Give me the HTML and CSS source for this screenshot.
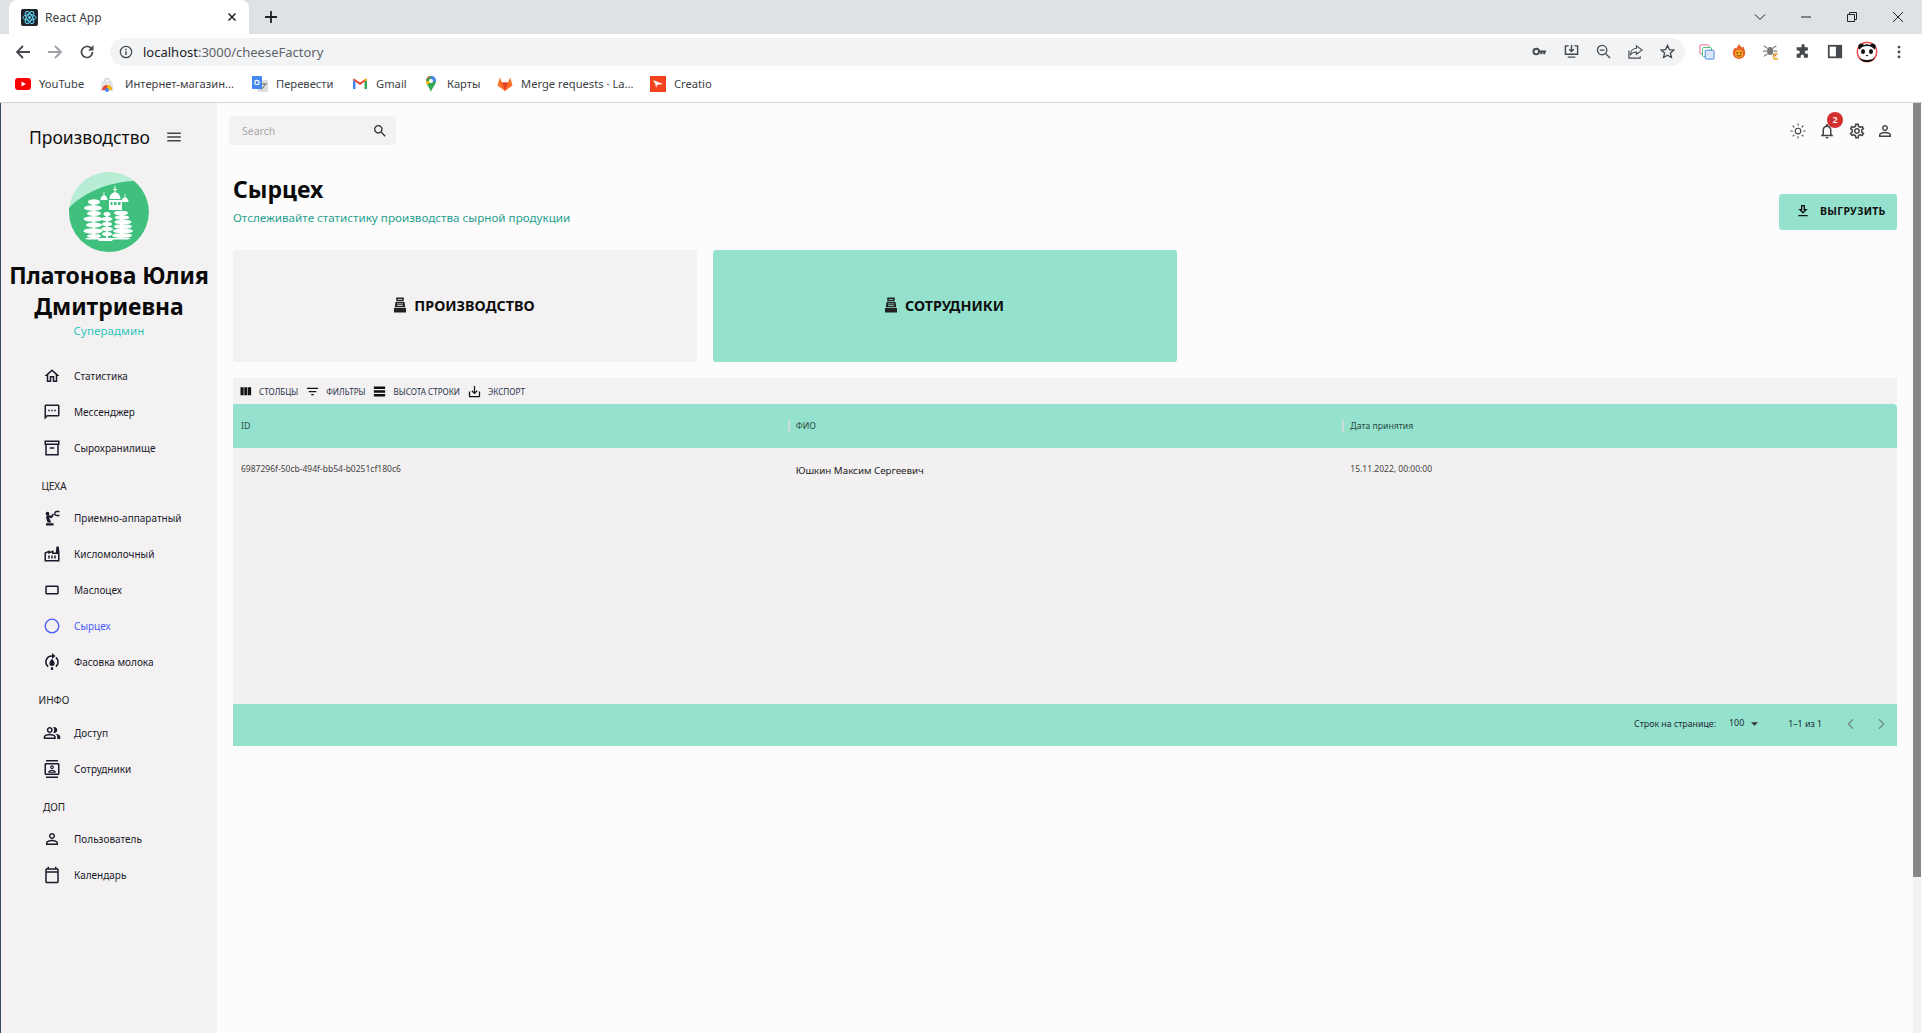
FILE: index.html
```html
<!DOCTYPE html>
<html lang="ru">
<head>
<meta charset="utf-8">
<title>React App</title>
<link rel="stylesheet" href="styles.css">
</head>
<body>
<svg class="sprite" xmlns="http://www.w3.org/2000/svg">
  <symbol id="i-home" viewBox="0 0 24 24"><path d="M12 5.69l5 4.5V18h-2v-6H9v6H7v-7.81l5-4.5M12 3L2 12h3v8h6v-6h2v6h6v-8h3L12 3z"/></symbol>
  <symbol id="i-sms" viewBox="0 0 24 24"><path d="M20 2H4c-1.1 0-2 .9-2 2v18l4-4h14c1.1 0 2-.9 2-2V4c0-1.1-.9-2-2-2zm0 14H5.17L4 17.17V4h16v12zM7 9h2v2H7zm4 0h2v2h-2zm4 0h2v2h-2z"/></symbol>
  <symbol id="i-archive" viewBox="0 0 24 24"><path fill-rule="evenodd" d="M2 2h20v6h-1v14H3V8H2V2zm2 2v2h16V4H4zm1 4v12h14V8H5zm4 3h6v2H9v-2z"/></symbol>
  <symbol id="i-robot" viewBox="0 0 24 24"><path d="M4 19h10v3H4zM6 18l-2-7 1-2 2-1 4 1 2-3 1.800 1.200-3 5-3.800-1 3 6.800zM3.500 6a2.500 2.500 0 1 1 5 0 2.500 2.500 0 0 1-5 0zM22 4.200h-3.500a1.800 1.800 0 0 0 0 3.600H22v1.800h-3.500a3.600 3.600 0 0 1 0-7.200H22z"/></symbol>
  <symbol id="i-factory" viewBox="0 0 24 24"><path d="M22 22H2V10l7-3v2l5-2v3h3l1-8h3l1 8v12zM12 9.950l-5 2V10l-3 1.320V20h16v-8h-8V9.950zM11 18h2v-4h-2v4zm-4 0h2v-4H7v4zm10-4h-2v4h2v-4z"/></symbol>
  <symbol id="i-rect" viewBox="0 0 24 24"><path d="M19 6H5c-1.100 0-2 .9-2 2v8c0 1.100.9 2 2 2h14c1.100 0 2-.9 2-2V8c0-1.100-.9-2-2-2zm0 10H5V8h14v8z"/></symbol>
  <symbol id="i-circle" viewBox="0 0 24 24"><path d="M12 2a10 10 0 1 0 0 20 10 10 0 0 0 0-20zm0 18.200a8.200 8.200 0 1 1 0-16.400 8.200 8.200 0 0 1 0 16.400z"/></symbol>
  <symbol id="i-fill" viewBox="0 0 24 24"><path d="M12 3V0l4.500 4L12 8V5a7 7 0 0 0-4.500 12.400L6.200 19A9 9 0 0 1 12 3zM17.800 5a9 9 0 0 1 0 14l-1.300-1.600a7 7 0 0 0 0-10.800zM12 7.500c2 2.500 3.500 4.300 3.500 6.200a3.500 3.500 0 0 1-7 0c0-1.900 1.500-3.700 3.500-6.200zM10.500 19h3v3.500h-3z"/></symbol>
  <symbol id="i-people" viewBox="0 0 24 24"><path d="M16.670 13.130C18.040 14.060 19 15.320 19 17v3h4v-3c0-2.180-3.570-3.470-6.330-3.870zM15 12c2.210 0 4-1.790 4-4s-1.790-4-4-4c-.47 0-.91.1-1.330.24C14.500 5.270 15 6.580 15 8s-.5 2.730-1.330 3.760c.42.14.86.24 1.330.24zM9 12c2.210 0 4-1.790 4-4s-1.790-4-4-4-4 1.790-4 4 1.790 4 4 4zm0-6c1.100 0 2 .9 2 2s-.9 2-2 2-2-.9-2-2 .9-2 2-2zM9 13c-2.670 0-8 1.340-8 4v3h16v-3c0-2.660-5.330-4-8-4zm6 5H3v-.99C3.200 16.290 6.300 15 9 15s5.800 1.290 6 2v1z"/></symbol>
  <symbol id="i-contacts" viewBox="0 0 24 24"><path d="M20 0H4v2h16V0zM4 24h16v-2H4v2zM20 4H4c-1.100 0-2 .9-2 2v12c0 1.100.9 2 2 2h16c1.100 0 2-.9 2-2V6c0-1.100-.9-2-2-2zm0 14H4V6h16v12zM12 12c1.380 0 2.500-1.120 2.500-2.500S13.380 7 12 7 9.500 8.120 9.500 9.500 10.620 12 12 12zm0-3.500c.55 0 1 .45 1 1s-.45 1-1 1-1-.45-1-1 .45-1 1-1zm5 7.490C17 13.900 13.690 13 12 13s-5 .9-5 2.990V17h10v-1.010zm-8.190-.49c.61-.52 2.030-1 3.190-1 1.170 0 2.590.48 3.200 1H8.810z"/></symbol>
  <symbol id="i-person" viewBox="0 0 24 24"><path d="M12 5.900c1.160 0 2.100.94 2.100 2.100s-.94 2.100-2.100 2.100S9.900 9.160 9.900 8s.94-2.100 2.100-2.100m0 9c2.970 0 6.100 1.460 6.100 2.100v1.100H5.900V17c0-.64 3.130-2.100 6.100-2.100M12 4C9.790 4 8 5.790 8 8s1.790 4 4 4 4-1.790 4-4-1.790-4-4-4zm0 9c-2.670 0-8 1.340-8 4v3h16v-3c0-2.660-5.330-4-8-4z"/></symbol>
  <symbol id="i-calendar" viewBox="0 0 24 24"><path d="M19 3h-1V1h-2v2H8V1H6v2H5c-1.100 0-2 .9-2 2v16c0 1.100.9 2 2 2h14c1.100 0 2-.9 2-2V5c0-1.100-.9-2-2-2zm0 18H5V9h14v12zm0-14H5V5h14v2z"/></symbol>
  <symbol id="i-stamp" viewBox="0 0 24 24"><path fill-rule="evenodd" d="M7 2h10v5H7zM9 4v1h6V4zM6 8h12l1 7H5zM8 10v1h8v-1zM8 12v1h8v-1zM4 16h16v6H4z"/></symbol>
  <symbol id="i-columns" viewBox="0 0 24 24"><path d="M10 18h5V5h-5v13zm-6 0h5V5H4v13zM16 5v13h5V5h-5z"/></symbol>
  <symbol id="i-filter" viewBox="0 0 24 24"><path d="M10 18h4v-2h-4v2zM3 6v2h18V6H3zm3 7h12v-2H6v2z"/></symbol>
  <symbol id="i-rows" viewBox="0 0 24 24"><path d="M21 8H3V4h18v4zm0 2H3v4h18v-4zm0 6H3v4h18v-4z"/></symbol>
  <symbol id="i-export" viewBox="0 0 24 24"><path d="M19 12v7H5v-7H3v7c0 1.100.9 2 2 2h14c1.100 0 2-.9 2-2v-7h-2zm-6 .67l2.590-2.580L17 11.500l-5 5-5-5 1.410-1.410L11 12.670V3h2z"/></symbol>
  <symbol id="i-download" viewBox="0 0 24 24"><path d="M13 5v6h1.170L12 13.170 9.830 11H11V5h2m2-2H9v6H5l7 7 7-7h-4V3zm4 15H5v2h14v-2z"/></symbol>
  <symbol id="i-search" viewBox="0 0 24 24"><path d="M15.500 14h-.79l-.28-.27C15.410 12.590 16 11.110 16 9.500 16 5.910 13.090 3 9.500 3S3 5.910 3 9.500 5.910 16 9.500 16c1.610 0 3.090-.59 4.230-1.570l.27.28v.79l5 4.990L20.490 19l-4.990-5zm-6 0C7.010 14 5 11.990 5 9.500S7.010 5 9.500 5 14 7.010 14 9.500 11.990 14 9.500 14z"/></symbol>
  <symbol id="i-sun" viewBox="0 0 24 24"><path d="M12 9a3 3 0 1 1 0 6 3 3 0 0 1 0-6m0-1.500a4.500 4.500 0 1 0 0 9 4.500 4.500 0 0 0 0-9zM11.300 2h1.400v3h-1.400zM11.300 19h1.400v3h-1.400zM2 11.300h3v1.400H2zM19 11.300h3v1.400h-3zM4.400 5.400l1-1 2.100 2.100-1 1zM16.500 17.500l1-1 2.100 2.100-1 1zM4.400 18.600l2.100-2.100 1 1-2.100 2.100zM16.500 6.500l2.100-2.100 1 1-2.100 2.100z"/></symbol>
  <symbol id="i-bell" viewBox="0 0 24 24"><path d="M12 22c1.100 0 2-.9 2-2h-4c0 1.100.9 2 2 2zm6-6v-5c0-3.070-1.630-5.640-4.500-6.320V4c0-.83-.67-1.500-1.500-1.500s-1.500.67-1.500 1.500v.68C7.640 5.360 6 7.920 6 11v5l-2 2v1h16v-1l-2-2zm-2 1H8v-6c0-2.480 1.510-4.500 4-4.500s4 2.020 4 4.500v6z"/></symbol>
  <symbol id="i-gear" viewBox="0 0 24 24"><path d="M19.430 12.980c.04-.32.07-.64.07-.98 0-.34-.03-.66-.07-.98l2.110-1.650c.19-.15.24-.42.12-.64l-2-3.460c-.09-.16-.26-.25-.44-.25-.06 0-.12.01-.17.03l-2.490 1c-.52-.4-1.080-.73-1.690-.98l-.38-2.650C14.460 2.180 14.250 2 14 2h-4c-.25 0-.46.18-.49.42l-.38 2.650c-.61.25-1.170.59-1.690.98l-2.490-1c-.06-.02-.12-.03-.18-.03-.17 0-.34.09-.43.25l-2 3.460c-.13.22-.07.49.12.64l2.110 1.650c-.04.32-.07.65-.07.98 0 .33.03.66.07.98l-2.110 1.650c-.19.15-.24.42-.12.64l2 3.460c.09.16.26.25.44.25.06 0 .12-.01.17-.03l2.490-1c.52.4 1.080.73 1.690.98l.38 2.650c.03.24.24.42.49.42h4c.25 0 .46-.18.49-.42l.38-2.650c.61-.25 1.170-.59 1.690-.98l2.490 1c.06.02.12.03.18.03.17 0 .34-.09.43-.25l2-3.460c.12-.22.07-.49-.12-.64l-2.110-1.650zm-1.980-1.710c.04.31.05.52.05.73 0 .21-.02.43-.05.73l-.14 1.130.89.7 1.080.84-.7 1.210-1.270-.51-1.040-.42-.9.68c-.43.32-.84.56-1.250.73l-1.060.43-.16 1.130-.2 1.350h-1.400l-.19-1.350-.16-1.130-1.060-.43c-.43-.18-.83-.41-1.230-.71l-.91-.7-1.060.43-1.270.51-.7-1.210 1.080-.84.89-.7-.14-1.130c-.03-.31-.05-.54-.05-.74s.02-.43.05-.73l.14-1.130-.89-.7-1.080-.84.7-1.210 1.270.51 1.040.42.9-.68c.43-.32.84-.56 1.250-.73l1.060-.43.16-1.130.2-1.350h1.390l.19 1.350.16 1.130 1.060.43c.43.18.83.41 1.230.71l.91.7 1.060-.43 1.270-.51.7 1.210-1.070.85-.89.7.14 1.130zM12 8c-2.210 0-4 1.790-4 4s1.790 4 4 4 4-1.790 4-4-1.790-4-4-4zm0 6c-1.100 0-2-.9-2-2s.9-2 2-2 2 .9 2 2-.9 2-2 2z"/></symbol>
  <symbol id="i-menu" viewBox="0 0 24 24"><path d="M3 18h18v-2H3v2zm0-5h18v-2H3v2zm0-7v2h18V6H3z"/></symbol>
</svg>

<div class="browser">
  <div class="tabstrip">
    <div class="tab">
      <svg class="favicon" viewBox="0 0 18 18"><rect width="18" height="18" rx="2" fill="#20232a"/><g fill="none" stroke="#61dafb" stroke-width="1"><ellipse cx="9" cy="9" rx="7" ry="3"/><ellipse cx="9" cy="9" rx="7" ry="3" transform="rotate(60 9 9)"/><ellipse cx="9" cy="9" rx="7" ry="3" transform="rotate(120 9 9)"/></g><circle cx="9" cy="9" r="1.500" fill="#61dafb"/></svg>
      <span class="tab-title">React App</span>
      <svg class="tab-close" viewBox="0 0 10 10"><path d="M1.500 1.500l7 7M8.500 1.500l-7 7" stroke="#222" stroke-width="1.500"/></svg>
    </div>
    <svg class="tab-new" viewBox="0 0 12 12"><path d="M6 0v12M0 6h12" stroke="#222" stroke-width="1.800"/></svg>
    <div class="winctl">
      <svg viewBox="0 0 12 12"><path d="M1 3.500l5 5 5-5" fill="none" stroke="#222"/></svg>
      <svg viewBox="0 0 12 12"><path d="M1 6h10" stroke="#222"/></svg>
      <svg viewBox="0 0 12 12"><path d="M1.500 3.500h7v7h-7zM3.500 3.500v-2h7v7h-2" fill="none" stroke="#222"/></svg>
      <svg viewBox="0 0 12 12"><path d="M1 1l10 10M11 1L1 11" stroke="#222"/></svg>
    </div>
  </div>
  <div class="toolbar">
    <svg class="nav-btn" viewBox="0 0 16 16"><path d="M15 8H2M8 2L2 8l6 6" fill="none" stroke="#45484c" stroke-width="1.800"/></svg>
    <svg class="nav-btn" viewBox="0 0 16 16"><path d="M1 8h13M8 2l6 6-6 6" fill="none" stroke="#9da0a4" stroke-width="1.800"/></svg>
    <svg class="nav-btn" viewBox="0 0 16 16"><path d="M13.500 8a5.500 5.500 0 1 1-1.600-3.900" fill="none" stroke="#45484c" stroke-width="1.700"/><path d="M14.500 1v5.500H9z" fill="#45484c"/></svg>
    <div class="omnibox">
      <svg class="omni-info" viewBox="0 0 16 16"><circle cx="8" cy="8" r="6.500" fill="none" stroke="#45484c" stroke-width="1.400"/><path d="M7.200 7h1.600v4.500H7.200zM7.200 4.300h1.600v1.600H7.200z" fill="#45484c"/></svg>
      <span class="url"><span class="url-host">localhost</span>:3000/cheeseFactory</span>
      <div class="omni-icons">
        <svg viewBox="0 0 16 16"><circle cx="4.500" cy="8" r="3" fill="none" stroke="#45484c" stroke-width="2"/><path d="M7 7h8v2h-1v2h-2V9h-1v2H9V9H7z" fill="#45484c"/></svg>
        <svg viewBox="0 0 16 16"><path d="M5 2H1.500v9h13V2H11M8 1v7M5.500 5.500L8 8l2.500-2.500M4 14h8" fill="none" stroke="#45484c" stroke-width="1.500"/></svg>
        <svg viewBox="0 0 16 16"><circle cx="6.500" cy="6.500" r="5" fill="none" stroke="#45484c" stroke-width="1.400"/><path d="M4 6.500h5M10 10l5 5" stroke="#45484c" stroke-width="1.400"/></svg>
        <svg viewBox="0 0 16 16"><path d="M9 2l6 4.500L9 11V8.500C5.500 8.500 3.500 10 2.500 12 2.500 8 5 4.800 9 4.500zM1 7v8h12v-2" fill="none" stroke="#45484c" stroke-width="1.200"/></svg>
        <svg viewBox="0 0 16 16"><path d="M8 1.500l2 4.500 4.800.4-3.700 3.200 1.100 4.800L8 12l-4.200 2.400 1.100-4.800L1.200 6.400 6 6z" fill="none" stroke="#45484c" stroke-width="1.400"/></svg>
      </div>
    </div>
    <div class="ext-icons">
      <svg viewBox="0 0 18 18"><rect x="1" y="1" width="10" height="10" rx="1" fill="#fff" stroke="#e8557f"/><rect x="4" y="4" width="10" height="10" rx="1" fill="#fff" stroke="#34b56c"/><rect x="7" y="7" width="10" height="10" rx="1" fill="#dbe8fb" stroke="#3b7fe0"/></svg>
      <svg viewBox="0 0 18 18"><path d="M9 0c1 2 2 2 3 4 1-.5 1.500-1 2-1 .5 2 2 4 2 7a7 7 0 0 1-14 0c0-3 1.500-4 2.500-6L6 5c1-2 2-3 3-5z" fill="#e8622a"/><circle cx="9" cy="11" r="4.500" fill="#f7a823"/><circle cx="7" cy="10" r=".9" fill="#5a2d0c"/><circle cx="11" cy="10" r=".9" fill="#5a2d0c"/><path d="M6.500 12.500c1.500 1.500 3.500 1.500 5 0" fill="none" stroke="#5a2d0c"/></svg>
      <svg viewBox="0 0 18 18"><ellipse cx="8" cy="8" rx="3.500" ry="4.500" fill="#777"/><path d="M1 2l4 3M15 2l-4 3M0 8h4M12 8h4M1 14l4-3M15 14l-4-3" stroke="#777" stroke-width="1.200"/><path d="M16.500 11.500a3 3 0 1 0 0 5" fill="none" stroke="#f39a1e" stroke-width="1.600"/></svg>
      <svg viewBox="0 0 18 18"><path d="M7 1a2 2 0 0 1 4 0v2h4v4h-2a2 2 0 0 0 0 4h2v5h-5v-2a2 2 0 0 0-4 0v2H1v-5h2a2 2 0 0 0 0-4H1V3h6z" fill="#45484c" transform="translate(1 1) scale(.9)"/></svg>
      <svg viewBox="0 0 18 18"><rect x="2" y="2" width="14" height="13" fill="none" stroke="#45484c" stroke-width="2"/><rect x="10" y="2" width="6" height="13" fill="#45484c"/></svg>
      <svg class="avatar" viewBox="0 0 22 22"><circle cx="11" cy="11" r="10.500" fill="#ee4b4b"/><circle cx="11" cy="11" r="9" fill="#fff"/><path d="M3 3.500a3.500 3.500 0 0 1 5 .5c2-1 4-1 6 0a3.500 3.500 0 0 1 5-.5c1.500 2 .5 4.500-1 5-1-2-3-3.500-7-3.500S5 6.500 4 8.500c-1.500-.5-2.500-3-1-5zM3 16c2 4 14 4 16 0-1 3-4 5-8 5s-7-2-8-5z" fill="#111"/><ellipse cx="7" cy="10.500" rx="2" ry="2.500" fill="#111"/><ellipse cx="15" cy="10.500" rx="2" ry="2.500" fill="#111"/><path d="M9.500 14h3l-1.500 1.500z" fill="#111"/></svg>
      <svg viewBox="0 0 18 18"><circle cx="9" cy="3.500" r="1.600" fill="#45484c"/><circle cx="9" cy="9" r="1.600" fill="#45484c"/><circle cx="9" cy="14.500" r="1.600" fill="#45484c"/></svg>
    </div>
  </div>
  <div class="bookmarks">
    <div class="bm bm-yt"><svg viewBox="0 0 16 16"><rect y="2" width="16" height="12" rx="3" fill="#f00"/><path d="M6.500 5.500v5L11 8z" fill="#fff"/></svg><span>YouTube</span></div>
    <div class="bm bm-store"><svg viewBox="0 0 16 16"><path d="M3 5h10l2 10H1z" fill="#e4e4e4"/><path d="M5.500 5a2.500 2.500 0 0 1 5 0" fill="none" stroke="#bbb"/><path d="M3 14a5 5 0 0 1 10 0z" fill="#ea4335"/><path d="M8 14V9a5 5 0 0 1 5 5z" fill="#fbbc05"/><circle cx="8" cy="14" r="2" fill="#4285f4"/></svg><span>Интернет-магазин...</span></div>
    <div class="bm bm-tr"><svg viewBox="0 0 16 16"><rect x="6" y="4" width="10" height="12" fill="#ddd"/><rect y="0" width="10" height="13" rx="1" fill="#4285f4"/><circle cx="5" cy="6.500" r="2.200" fill="none" stroke="#fff" stroke-width="1.200"/><path d="M10 8h5M12.500 8c0 2-1 4-3 5" stroke="#666" fill="none"/></svg><span>Перевести</span></div>
    <div class="bm bm-gm"><svg viewBox="0 0 16 16"><path d="M1 13V4l2.500 1.500V13z" fill="#4285f4"/><path d="M12.500 13V5.500L15 4v9z" fill="#34a853"/><path d="M1 4l7 5 7-5-1-1.500L8 6.500 2 2.500z" fill="#ea4335"/><path d="M12.500 5.500L15 4l-1-1.500-1.500 1z" fill="#fbbc05"/></svg><span>Gmail</span></div>
    <div class="bm bm-maps"><svg viewBox="0 0 16 16"><path d="M8 0a5 5 0 0 0-5 5c0 3.500 3.500 6 5 11 1.500-5 5-7.500 5-11a5 5 0 0 0-5-5z" fill="#34a853"/><path d="M8 0a5 5 0 0 1 5 5L8 7z" fill="#4285f4"/><path d="M3 5a5 5 0 0 1 5-5L4 3z" fill="#ea4335"/><path d="M3 5c0 1.500.7 2.800 1.500 4L8 5z" fill="#fbbc05"/><circle cx="8" cy="5" r="2" fill="#fff"/></svg><span>Карты</span></div>
    <div class="bm bm-gl"><svg viewBox="0 0 16 16"><path d="M8 15L.5 9.500 2.800 1.500 5 6.500h6l2.200-5 2.300 8z" fill="#fc6d26"/><path d="M8 15L5 6.500h6z" fill="#e24329"/></svg><span>Merge requests · La...</span></div>
    <div class="bm bm-cr"><svg viewBox="0 0 16 16"><rect width="16" height="16" fill="#f4421f"/><path d="M3 4l10 4-6 1-1 3-.5-3.500z" fill="#fff"/></svg><span>Creatio</span></div>
  </div>
</div>

<div class="app">
  <aside class="sidebar">
    <div class="brand">
      <span class="brand-title">Производство</span>
      <svg class="brand-menu"><use href="#i-menu"/></svg>
    </div>
    <svg class="logo" viewBox="0 0 80 80">
      <circle cx="40" cy="40" r="40" fill="#b8edd5"/>
      <path d="M65 9a40 40 0 0 1-25 71A40 40 0 0 1 0 40v-4C15 20 40 10 65 9z" fill="#3fc07d"/>
      <g fill="#fff">
        <path d="M45.500 14h1v3h1.500v1h-1.500v2h-1v-2H44v-1h1.500zM34.600 20h.8v3h-.8zM55.600 22h.8v3h-.8z"/>
        <path d="M46 20c3.500 1 5.500 3.500 5.500 7h-11c0-3.500 2-6 5.500-7zM35 23c2 .6 3.500 2.400 3.500 5h-7c0-2.600 1.500-4.400 3.500-5zM56 25c2 .6 3.500 2.400 3.500 5h-7c0-2.600 1.500-4.400 3.500-5z"/>
        <rect x="40" y="28" width="13" height="2"/>
        <rect x="40" y="33" width="13" height="5"/>
        <rect x="40" y="30" width="1.500" height="3"/><rect x="43.500" y="30" width="1.500" height="3"/><rect x="47.500" y="30" width="1.500" height="3"/><rect x="51.500" y="30" width="1.500" height="3"/>
        <ellipse cx="25" cy="30" rx="6" ry="2.700"/><ellipse cx="24" cy="36" rx="9" ry="2.800"/><ellipse cx="25" cy="41.500" rx="7" ry="2.500"/><ellipse cx="24" cy="47" rx="9.500" ry="2.800"/><ellipse cx="25" cy="53" rx="8" ry="2.500"/><ellipse cx="24" cy="59" rx="9.500" ry="2.800"/><ellipse cx="25" cy="64" rx="7" ry="2"/>
        <rect x="23.500" y="30" width="2.500" height="36"/>
        <ellipse cx="38" cy="42" rx="3.500" ry="2"/><ellipse cx="38" cy="47" rx="5.500" ry="2.200"/><ellipse cx="38" cy="52" rx="5" ry="2"/><ellipse cx="38" cy="57" rx="6" ry="2.200"/><ellipse cx="38" cy="62" rx="5" ry="2"/>
        <rect x="37" y="42" width="2" height="24"/>
        <ellipse cx="52" cy="41" rx="7" ry="2.300"/><ellipse cx="53" cy="45.500" rx="7.500" ry="2.200"/><ellipse cx="54" cy="50" rx="8.500" ry="2.300"/><ellipse cx="54" cy="54.500" rx="9" ry="2.300"/><ellipse cx="54" cy="59" rx="10" ry="2.400"/><ellipse cx="53" cy="63.500" rx="10" ry="2.300"/>
        <rect x="51" y="39" width="3" height="27"/>
        <path d="M16 66h46l-3 1.500H44l-1 1.500H30l-1-1.500H18z"/>
      </g>
    </svg>
    <h2 class="user-name">Платонова Юлия Дмитриевна</h2>
    <div class="user-role">Суперадмин</div>
    <nav class="menu">
      <a class="menu-item"><svg><use href="#i-home"/></svg><span>Статистика</span></a>
      <a class="menu-item"><svg><use href="#i-sms"/></svg><span>Мессенджер</span></a>
      <a class="menu-item"><svg><use href="#i-archive"/></svg><span>Сырохранилище</span></a>
      <div class="menu-section">ЦЕХА</div>
      <a class="menu-item"><svg><use href="#i-robot"/></svg><span>Приемно-аппаратный</span></a>
      <a class="menu-item"><svg><use href="#i-factory"/></svg><span>Кисломолочный</span></a>
      <a class="menu-item"><svg><use href="#i-rect"/></svg><span>Маслоцех</span></a>
      <a class="menu-item active"><svg><use href="#i-circle"/></svg><span>Сырцех</span></a>
      <a class="menu-item"><svg><use href="#i-fill"/></svg><span>Фасовка молока</span></a>
      <div class="menu-section">ИНФО</div>
      <a class="menu-item"><svg><use href="#i-people"/></svg><span>Доступ</span></a>
      <a class="menu-item"><svg><use href="#i-contacts"/></svg><span>Сотрудники</span></a>
      <div class="menu-section">ДОП</div>
      <a class="menu-item"><svg><use href="#i-person"/></svg><span>Пользователь</span></a>
      <a class="menu-item"><svg><use href="#i-calendar"/></svg><span>Календарь</span></a>
    </nav>
  </aside>

  <main class="main">
    <header class="topbar">
      <div class="search"><span>Search</span><svg><use href="#i-search"/></svg></div>
      <div class="top-icons">
        <svg><use href="#i-sun"/></svg>
        <div class="bell"><svg><use href="#i-bell"/></svg><b class="badge">2</b></div>
        <svg><use href="#i-gear"/></svg>
        <svg><use href="#i-person"/></svg>
      </div>
    </header>

    <section class="page-head">
      <div>
        <h1 class="page-title">Сырцех</h1>
        <p class="page-sub">Отслеживайте статистику производства сырной продукции</p>
      </div>
      <button class="export-btn"><svg><use href="#i-download"/></svg>ВЫГРУЗИТЬ</button>
    </section>

    <section class="cards">
      <div class="card"><svg><use href="#i-stamp"/></svg>ПРОИЗВОДСТВО</div>
      <div class="card card-on"><svg><use href="#i-stamp"/></svg>СОТРУДНИКИ</div>
    </section>

    <section class="grid">
      <div class="grid-tools">
        <span class="tool"><svg><use href="#i-columns"/></svg>Столбцы</span>
        <span class="tool"><svg><use href="#i-filter"/></svg>Фильтры</span>
        <span class="tool"><svg><use href="#i-rows"/></svg>Высота строки</span>
        <span class="tool"><svg><use href="#i-export"/></svg>Экспорт</span>
      </div>
      <div class="grid-head">
        <div class="head-cell">ID</div>
        <div class="head-cell">ФИО</div>
        <div class="head-cell">Дата принятия</div>
      </div>
      <div class="grid-body">
        <div class="row">
          <div class="cell">6987296f-50cb-494f-bb54-b0251cf180c6</div>
          <div class="cell cell-name">Юшкин Максим Сергеевич</div>
          <div class="cell">15.11.2022, 00:00:00</div>
        </div>
      </div>
      <div class="grid-foot">
        <span>Строк на странице:</span>
        <span class="per-page">100</span>
        <svg class="caret" viewBox="0 0 10 5"><path d="M0 0h10L5 5z"/></svg>
        <span class="range">1–1 из 1</span>
        <svg class="pager" viewBox="0 0 24 24"><path d="M15 5l-7 7 7 7" fill="none" stroke="#6f8f85" stroke-width="2"/></svg>
        <svg class="pager" viewBox="0 0 24 24"><path d="M9 5l7 7-7 7" fill="none" stroke="#6f8f85" stroke-width="2"/></svg>
      </div>
    </section>
  </main>

  <div class="scrollbar"><div class="thumb"></div></div>
</div>
</body>
</html>
```

FILE: styles.css
```css
* { box-sizing: border-box; }
html, body { margin: 0; height: 1033px; overflow: hidden; }
body {
  display: flex;
  flex-direction: column;
  font-family: "Noto Sans", sans-serif;
  color: #111;
  background: #fcfcfc;
}
svg { display: block; flex: none; fill: currentColor; }
.sprite { display: none; }
h1, h2, p { margin: 0; }

/* Browser frame */
.browser { flex: none; height: 103px; background: #fff; border-bottom: 1px solid #d4d4d4; }
.tabstrip { height: 34px; background: #dee1e6; display: flex; align-items: center; padding-left: 9px; }
.tab {
  width: 240px; height: 34px; background: #fff; border-radius: 8px 8px 0 0;
  display: flex; align-items: center; padding: 0 11px 0 12px;
}
.favicon { width: 17px; height: 17px; }
.tab-title { margin-left: 7px; font-size: 12px; color: #3c4043; flex: 1; }
.tab-close { width: 10px; height: 10px; margin-right: 1px; }
.tab-new { width: 12px; height: 12px; margin-left: 16px; }
.winctl { margin-left: auto; display: flex; gap: 34px; padding-right: 18px; }
.winctl svg { width: 12px; height: 12px; }
.toolbar { height: 35px; display: flex; align-items: center; padding-left: 15px; }
.nav-btn { width: 16px; height: 16px; margin-right: 16px; }
.omnibox {
  width: 1575px; height: 28px; margin-left: -1px; border-radius: 14px; background: #f1f3f4;
  display: flex; align-items: center; padding: 0 10px 0 9px;
}
.omni-info { width: 14px; height: 14px; }
.url { margin-left: 10px; font-size: 13px; color: #5f6368; }
.url-host { color: #202124; }
.omni-icons { margin-left: auto; display: flex; gap: 17px; }
.omni-icons svg { width: 15px; height: 15px; }
.ext-icons { display: flex; align-items: center; margin-left: 14px; gap: 16px; }
.ext-icons svg { width: 16px; height: 16px; }
.ext-icons .avatar { width: 22px; height: 22px; margin: 0 -3px; }
.bookmarks { height: 33px; display: flex; align-items: center; padding: 0 0 4px 15px; }
.bm { display: flex; align-items: center; gap: 8px; font-size: 11.200px; color: #3c4043; white-space: nowrap; }
.bm svg { width: 16px; height: 16px; }
.bm-yt { width: 84px; }
.bm-store { width: 153px; gap: 10px; }
.bm-tr { width: 100px; }
.bm-gm { width: 71px; }
.bm-maps { width: 74px; }
.bm-gl { width: 153px; }

/* Layout */
.app { flex: 1; min-height: 0; display: flex; }
.sidebar {
  flex: none; width: 217px; background: #f3f1f2; border-left: 1px solid #3c4a60;
  display: flex; flex-direction: column; align-items: center;
}
.brand { display: flex; align-items: center; width: 100%; padding: 22px 0 0 28px; height: 46px; }
.brand-title { font-size: 17.500px; line-height: 24px; color: #111; width: 133px; white-space: nowrap; }
.brand-menu { width: 18px; height: 18px; color: #444; margin-left: 3px; }
.logo { width: 80px; height: 80px; margin: 23px 0 0 0; }
.user-name { width: 210px; margin-top: 8px; font-size: 22.900px; line-height: 31px; font-weight: 700; text-align: center; color: #0a0a0a; }
.user-role { font-size: 11.500px; line-height: 18px; margin-top: 0; color: #2fc7ba; letter-spacing: .1px; }

.menu { width: 100%; margin-top: 18px; display: flex; flex-direction: column; }
.menu-item { height: 36px; display: flex; align-items: center; padding-left: 42px; font-size: 10px; color: #1a1a2a; }
.menu-item svg { width: 18px; height: 18px; }
.menu-item span { margin-left: 13px; }
.menu-item.active { color: #4c5dff; }
.menu-section { height: 34.400px; padding: 10px 0 3.400px; line-height: 21px; font-size: 10px; width: 106px; text-align: center; color: #222; }

.main { flex: 1; min-width: 0; padding: 13px 16px 0 12px; }
.topbar { display: flex; justify-content: space-between; align-items: center; height: 29px; }
.search {
  width: 167px; height: 29px; background: #f3f1f2; border-radius: 3px;
  display: flex; align-items: center; justify-content: space-between; padding: 0 8px 0 13px;
  font-size: 10.500px; color: #a8a8a8;
}
.search svg { width: 16px; height: 16px; color: #333; }
.top-icons { display: flex; align-items: center; gap: 11px; padding-right: 3px; color: #444; }
.top-icons svg { width: 18px; height: 18px; }
.bell { position: relative; margin-right: 1px; }
.top-icons > svg:last-child { margin-left: -1px; }
.badge {
  position: absolute; top: -10px; left: 9px; width: 16px; height: 16px; border-radius: 50%;
  background: #d32f2f; color: #fff; font-size: 9px; line-height: 16px; text-align: center; font-weight: 600;
}

.page-head { display: flex; justify-content: space-between; padding-left: 4px; margin-top: 29px; height: 76px; }
.page-title { font-size: 23px; line-height: 31px; font-weight: 700; margin-top: 0; color: #0a0a0a; }
.page-sub { font-size: 11.660px; line-height: 16px; margin-top: 5px; color: #26a08e; }
.export-btn {
  width: 118px; height: 36px; margin-top: 20px; border: 0; border-radius: 3px; background: #94e2cd;
  display: flex; align-items: center; padding: 0 0 2px 16px; gap: 9px;
  font: 700 10.500px "Noto Sans", sans-serif; letter-spacing: .3px; color: #111;
}
.export-btn svg { width: 16px; height: 16px; }

.cards { display: grid; grid-template-columns: 464px 464px; gap: 16px; padding-left: 4px; }
.card {
  height: 112px; padding: 0 4px 2px 0; background: #f3f1f2; border-radius: 3px;
  display: flex; align-items: center; justify-content: center; gap: 5px;
  font-size: 14.300px; font-weight: 700; color: #0e0e0e;
}
.card svg { width: 18px; height: 18px; color: #222; }
.card-on { background: #94e2cd; }

.grid { margin: 16px 0 0 4px; }
.grid-tools { height: 26px; padding: 1px 0 0 5px; background: #f3f1f2; display: flex; align-items: center; gap: 7px; }
.tool { display: flex; align-items: center; gap: 6px; font-size: 8.150px; text-transform: uppercase; color: #26304a; }
.tool svg { width: 15px; height: 15px; color: #111; }
.grid-head {
  height: 44px; background: #94e2cd; border-radius: 0 4px 0 0;
  display: grid; grid-template-columns: repeat(3, 1fr); align-items: center;
}
.head-cell { font-size: 8.700px; color: #2a4a44; padding-left: 8px; line-height: 12px; }
.head-cell + .head-cell { border-left: 2px solid #c9ddd7; padding-left: 6px; margin-left: 0; }
.grid-body { height: 256px; background: #f2f0f1; }
.row { display: grid; grid-template-columns: repeat(3, 1fr); padding-top: 14px; }
.cell { font-size: 8.500px; line-height: 13px; color: #444; padding-left: 8px; }
.cell-name { font-size: 9.750px; color: #222; padding-top: 2px; }
.grid-foot {
  height: 42px; padding-bottom: 2px; background: #94e2cd; display: flex; align-items: center; justify-content: flex-end;
  font-size: 8.800px; color: #1d2a33; padding-right: 8px;
}
.per-page { margin-left: 13px; margin-top: -2px; }
.caret { width: 7px; height: 4px; margin-left: 7px; color: #333; }
.range { margin-left: 30px; margin-right: 15px; }
.pager { width: 16px; height: 16px; margin-left: 6px; }
.pager + .pager { margin-left: 14px; }

.scrollbar { flex: none; width: 8px; background: #f1f1f1; margin-right: 1px; }
.thumb { height: 774px; background: #878787; }
```
